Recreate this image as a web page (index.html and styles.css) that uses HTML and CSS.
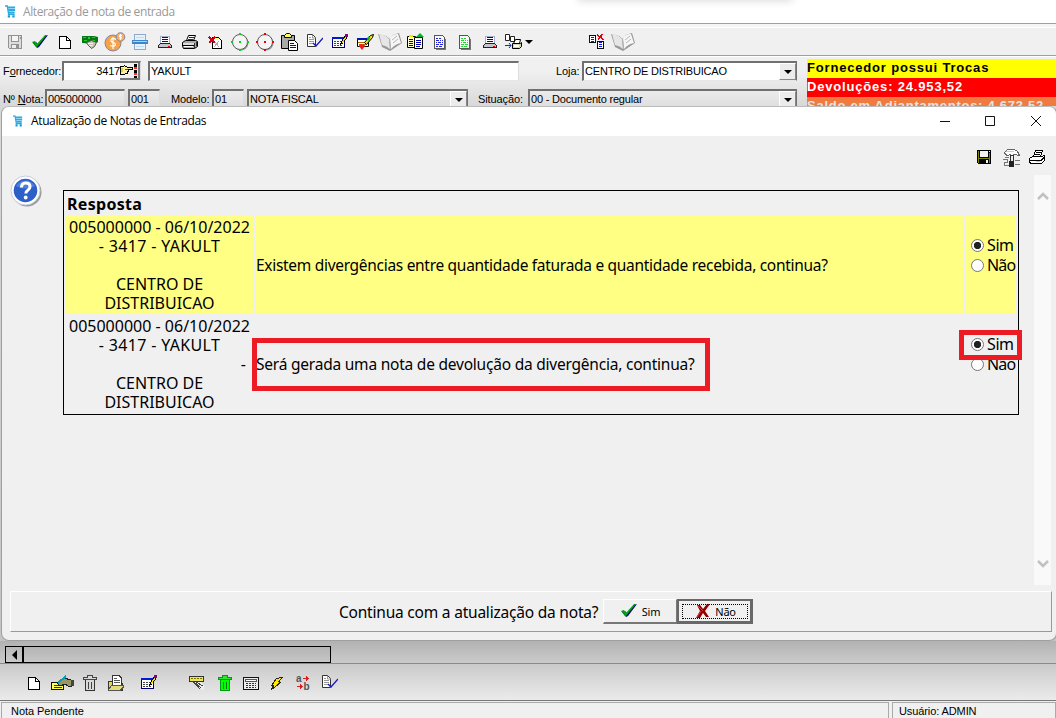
FILE: index.html
```html
<!DOCTYPE html>
<html lang="pt-BR">
<head>
<meta charset="utf-8">
<title>Alteração de nota de entrada</title>
<link rel="stylesheet" href="styles.css">
</head>
<body>
<svg class="defs" aria-hidden="true">
  <symbol id="cart" viewBox="0 0 12 14"><path d="M0 1h2.500l1.500 9h6.500" fill="none" stroke="#29abe2" stroke-width="1.500"/><path d="M3 1.500h8v2.200H3zM3.500 4.300H11v2.200H3.700zM4 7h6.500v2.200H4z" fill="#29abe2"/><path d="M3 11h2.500v2.500H3zM8 11h2.500v2.500H8z" fill="#1597d4"/></symbol>
  <symbol id="floppy-off" viewBox="0 0 16 16"><path d="M1.500 1.500h13v13h-12l-1-1z" fill="#ddd" stroke="#929292"/><path d="M4.500 1.500h7v6h-7z" fill="#f4f4f4" stroke="#929292"/><path d="M4.500 10.500h7v4h-7z" fill="#eee" stroke="#929292"/><path d="M9 11h2v3H9zM13 3h1v2h-1z" fill="#929292"/></symbol>
  <symbol id="check" viewBox="0 0 18 16"><path d="M2 9l3-1 2 2 7-8 3-1-9 12-2 1z" fill="#000080"/><path d="M1 8l3-1 2 3 8-9h2L6 13H5z" fill="#009a10"/><path d="M4 8l2 3 7-8" fill="none" stroke="#12ae1c"/></symbol>
  <symbol id="page" viewBox="0 0 16 16"><path d="M2.500 2.500h7l4 4v8h-11z" fill="#fff" stroke="#000"/><path d="M9.500 2.500v4h4" fill="none" stroke="#000"/></symbol>
  <symbol id="money" viewBox="0 0 18 16"><path d="M1 2h12l4 1v5l-4 2-12-1z" fill="#087515"/><path d="M2 3h3v1H2zM7 3h2v2H7zM11 3h3v1h-3zM3 6h3v1H3zM11 6h3v1h-3z" fill="#16d329"/><path d="M5.500 8.500l5-2 5 2-2 4-3 2-4-4z" fill="#c6c6b8" stroke="#555"/><path d="M7 9.500h5M8 11.500h4" stroke="#eee"/></symbol>
  <symbol id="coin" viewBox="0 0 22 20"><circle cx="9" cy="11" r="8" fill="#f6a347" stroke="#8884a5"/><circle cx="16.500" cy="5" r="4.300" fill="#f7ae62" stroke="#8884a5"/><path d="M12 7.500c-5-3-7 2-3 3s3 5-3 3M9 5v12M18 3.500c-3-1-3 1-1.500 1.500s1 2-1 1M16.500 2v6" fill="none" stroke="#fff" stroke-width="1.200"/></symbol>
  <symbol id="scan" viewBox="0 0 16 16"><path d="M2.500.5h11v6h-11zM2.500 9.500h11v6h-11z" fill="#e4f2ff" stroke="#92a9c8"/><path d="M0 6h16v4H0z" fill="#3b85cf"/><path d="M1 7.500h14" stroke="#a9d6ff"/><path d="M4 3.500h8M4 12.500h8" stroke="#bfdcf5"/></symbol>
  <symbol id="laptop" viewBox="0 0 16 16"><path d="M3.500 2.500h9v7h-9z" fill="#fff" stroke="#aac"/><path d="M5 3.500h6M5 5.500h6M5 7.500h6" stroke="#0000d8"/><path d="M1.500 11.500l2-2h9l2 2v2h-13z" fill="#c5c5d0" stroke="#222"/><path d="M11 12.500h2" stroke="#e00"/></symbol>
  <symbol id="printer" viewBox="0 0 18 16"><path d="M5.500 6.500l2-5h7l-2 5z" fill="#fff" stroke="#000"/><path d="M8 3.500h5M7 5.500h5" stroke="#1919d0"/><path d="M1.500 8.500l3-2h10l2 1v5l-3 2h-11l-1-2z" fill="#aaa" stroke="#000"/><path d="M2 9h11v2H2z" fill="#ddd"/><path d="M2 11.500h11" stroke="#000"/><path d="M3 12h9v1H3z" fill="#fff"/><path d="M13.500 9v5M15.500 8v4" stroke="#333"/></symbol>
  <symbol id="print2" viewBox="0 0 18 16"><path d="M5.500 7.500l2-6h7l-2 6z" fill="#fff" stroke="#000"/><path d="M8 3.500h5M7 5.500h5" stroke="#000"/><path d="M1.500 9.500l3-2h9l3-1v5l-3 3h-11l-1-2z" fill="#fff" stroke="#000"/><path d="M2 11.500h11l3-3" fill="none" stroke="#000"/><path d="M8 12h4v1H8z" fill="#eade00"/></symbol>
  <symbol id="delpage" viewBox="0 0 16 16"><path d="M5.500 3.500h6l3 3v8h-9z" fill="#fff" stroke="#000"/><path d="M8 8l4 5M12 7l-5 6" stroke="#aaa"/><path d="M9 4h3v2H9z" fill="#ff8"/><path d="M2 3l6 6M8 3L2 9" stroke="#d00018" stroke-width="1.500"/></symbol>
  <symbol id="circle" viewBox="0 0 18 18"><circle cx="10" cy="10" r="7.500" fill="#999"/><circle cx="9" cy="9" r="7.500" fill="#f4f4f4" stroke="#5b565b"/><path d="M8 0h2v2H8zM0 8h2v2H0zM8 8h2v2H8zM16 8h2v2h-2zM8 16h2v2H8z" fill="currentColor"/></symbol>
  <symbol id="paste" viewBox="0 0 18 18"><path d="M.5 2.500h13v13H.5z" fill="#aaa" stroke="#000"/><path d="M3.500 2.500l2-2h3l2 2v2h-7z" fill="#ffff58" stroke="#000"/><path d="M7.500 7.500h6l3 3v7h-9z" fill="#fff" stroke="#000"/><path d="M9 10.500h4M9 12.500h6M9 14.500h6" stroke="#00e"/></symbol>
  <symbol id="doccheck" viewBox="0 0 17 16"><path d="M1.500.5h5l3 3v9h-8z" fill="#fff" stroke="#333"/><path d="M3 3.500h2M3 5.500h5M3 7.500h5M3 9.500h4M6.500 1v3h3" stroke="#999" fill="none"/><path d="M7 9l3 3 7-8" fill="none" stroke="#1818bd" stroke-width="1.300"/></symbol>
  <symbol id="note" viewBox="0 0 17 16"><path d="M1.500 3.500h12v10h-12z" fill="#fff" stroke="#000080"/><path d="M1 3h12v2H1z" fill="#001bd0"/><path d="M3 7.500h8M3 9.500h8M3 11.500h8" stroke="#444" stroke-dasharray="2 1"/><path d="M9.500 10.500l1-3 4-6 2 1-4 6z" fill="#f0de00" stroke="#000"/><path d="M14 0h3v3h-3z" fill="#850082"/></symbol>
  <symbol id="broom" viewBox="0 0 18 18"><path d="M1.500 5.500h11v8h-11z" fill="#fff" stroke="#000"/><path d="M1 5h11v2H1z" fill="#0016bb"/><path d="M2 9.500h9M3 11.500h8" stroke="#b56b00"/><path d="M8.500 9.500l6-7 3-1-1 3-6 7z" fill="#ede500" stroke="#000"/><path d="M11 5l2-2 1 3-2 2z" fill="#00b526"/><path d="M4 11l2 1 2-1 1 2-3 4-3-4z" fill="#f01a1a"/></symbol>
  <symbol id="book" viewBox="0 0 24 20"><path d="M0 2l8 2 4 3 3-4 6-2 3 10-9 6-3 2-8-4z" fill="#999"/><path d="M1 2q7 1 10 5l1 10q-3-3-8-4z" fill="#e6e6e6"/><path d="M12 7q2-5 8-5l3 9q-6 1-10 6z" fill="#f6f6f6"/><path d="M11.500 7l1 10M14 8l5-4M15 11l5-4" fill="none" stroke="#b5b5b5"/></symbol>
  <symbol id="clips" viewBox="0 0 18 18"><path d="M1.500 3.500h8v11h-8z" fill="#ffc" stroke="#000"/><path d="M8.500 4.500h8v11h-8z" fill="#ffe" stroke="#000"/><path d="M3 6.500h4M3 8.500h4M3 10.500h4M3 12.500h4M10 7.500h5M10 9.500h5M10 11.500h5M10 13.500h4" stroke="#00a"/><path d="M3 2h4v2H3z" fill="#eee700"/><path d="M10 4l4-4 4 4z" fill="#00b52b"/></symbol>
  <symbol id="doclines" viewBox="0 0 16 16"><path d="M4 3h8l2 3v10H4z" fill="#777"/><path d="M2.500 1.500h8l2 2v11h-10z" fill="#f7f7f7" stroke="#555"/><path d="M4 4.500h2m1 0h2M4 6.500h3m1 0h1m1 0h1M4 8.500h1m1 0h3m1 0h1M4 10.500h3m1 0h3M4 12.500h2m1 0h3" stroke="currentColor"/></symbol>
  <symbol id="copyprint" viewBox="0 0 18 16"><path d="M1.500.5h4v6h-4zM6.500 2.500h4v5h-4z" fill="#fff" stroke="#222"/><path d="M1 11.500h6M5 9l2 2.500-2 2.500" fill="none" stroke="#0030cc"/><path d="M9.500 9.500l2-4h5l-1 4" fill="#fff" stroke="#000"/><path d="M8.500 9.500h8l1-1v4l-2 2h-7z" fill="#d6d6ab" stroke="#000"/><path d="M10 11h5v2h-5z" fill="#fff"/></symbol>
  <symbol id="docsx" viewBox="0 0 16 17"><path d="M.5 1.500h6v8h-6zM8.500 7.500h6v8h-6z" fill="#fff" stroke="#000"/><path d="M2 3.500h3M2 5.500h3M2 7.500h3M10 9.500h3M10 11.500h3M10 13.500h3" stroke="#00e"/><path d="M8 1l7 5M14 0L9 6" stroke="#e00015" stroke-width="1.800"/></symbol>
  <symbol id="trash" viewBox="0 0 14 16"><path d="M2.500 4.500h9v11h-9z" fill="currentColor" stroke="#333"/><path d="M.5 4.500v-2h4v-2h5v2h4v2z" fill="currentColor" stroke="#444"/><path d="M5.500 7v7M8.500 7v7" stroke="#444"/></symbol>
  <symbol id="trash-green" viewBox="0 0 14 16"><path d="M2.500 4.500h9v11h-9z" fill="#0f0" stroke="#009b12"/><path d="M.5 4.500v-2h4v-2h5v2h4v2z" fill="#2fe52f" stroke="#009b12"/><path d="M5.500 7v7M8.500 7v7" stroke="#087a12"/></symbol>
  <symbol id="handnote" viewBox="0 0 23 16"><path d="M.5 7.500h12v7H.5z" fill="#ff5" stroke="#111"/><path d="M3 10.500h8M3 12.500h8" stroke="#02f"/><path d="M6 8l7-5 7 2v6h-3l-3-2-5 2z" fill="#999665" stroke="#222"/><path d="M7 8l8-7" stroke="#00a3be" stroke-width="2"/><path d="M20 5h3v6h-3z" fill="#444"/></symbol>
  <symbol id="folder" viewBox="0 0 18 17"><path d="M1.500 6.500h4l1 2h9v7h-14z" fill="#ded950" stroke="#333"/><path d="M5.500.5h6l3 3v7h-9z" fill="#fff" stroke="#333"/><path d="M7 3.500h3M7 5.500h6M7 7.500h6" stroke="#555"/><path d="M1.500 15.500l3-5h12v2l-3 3z" fill="#e2dc7a" stroke="#555"/></symbol>
  <symbol id="handmoney" viewBox="0 0 18 16"><path d="M1.500 1.500h14v5h-14z" fill="#ebe65a" stroke="#333"/><path d="M3 3.500h11" stroke="#777100" stroke-dasharray="2 1"/><path d="M5 7l5 4 2 3 4 1v-5l-4-3z" fill="#eee"/><path d="M5 7l4 4 3 3M8 7l7 4M6 7l7 6" stroke="#444" fill="none"/></symbol>
  <symbol id="calc" viewBox="0 0 16 16"><path d="M.5 2.500h15v12H.5z" fill="#eee" stroke="#111"/><path d="M2.500 4.500h11v2h-11z" fill="#fff" stroke="#555"/><path d="M3 8.500h10M3 10.500h10M3 12.500h10" stroke="#333" stroke-dasharray="2 1"/></symbol>
  <symbol id="bolt" viewBox="0 0 14 16"><path d="M6.500 3.500l6-1-4 4 2 1-5 4-4 3 2-4h-2z" fill="#ffea00" stroke="#222"/></symbol>
  <symbol id="floppy" viewBox="0 0 14 14"><path d="M0 0h14v14H1l-1-1z" fill="#000"/><path d="M1 1h1v12H1zM12 3h1v10h-1zM2 8h10v1H2z" fill="#808000"/><path d="M3 1h8v6H3zM9 10h2v3H9zM12 1h1v1h-1z" fill="#f0f0f0"/></symbol>
  <symbol id="hammer" viewBox="0 0 18 18"><path d="M2.500 3.500l3-3h7l3 2 2 4-5-1h-1v2h-3v-2l-3 1-2-1z" fill="#fff" stroke="#666"/><path d="M4 2h8v1H4z" fill="#ccc"/><path d="M8.500 6.500h3v10h-3z" fill="#eee" stroke="#333"/><path d="M7 12h5v6H7z" fill="#222"/><path d="M3 8.500h4M1 10.500h4v3H2v3h5M13 11.500h5M13 15.500h5" fill="none" stroke="#777"/></symbol>
  <symbol id="hand" viewBox="0 0 14 11"><path d="M.5 1.500h3l1-1 3 2h5v2h-4v2h-1v2h-2l-1 1h-4z" fill="#f7efa0" stroke="#000"/><path d="M1 3h2v4H1z" fill="#e4cc43"/><path d="M5 4.500h3" stroke="#655900"/></symbol>
  <symbol id="chev" viewBox="0 0 12 8"><path d="M1 7l5-5 5 5" fill="none" stroke="#c1c1c1" stroke-width="2.500"/></symbol>
  <symbol id="cross" viewBox="0 0 14 14"><path d="M1 1h3l3 4 4-5h3L9 7l4 6h-3l-3-4-3 5H0l4-7z" fill="#900000"/><path d="M1 1l6 6M1 13l4-6" fill="none" stroke="#d63b3b"/></symbol>
</svg>

<div class="app">
  <header class="app-title"><svg class="cart"><use href="#cart"/></svg><span class="t-app">Alteração de nota de entrada</span></header>
  <nav class="toolbar">
    <i><svg class="s16"><use href="#floppy-off"/></svg></i>
    <i><svg class="s18"><use href="#check"/></svg></i>
    <i><svg class="s16"><use href="#page"/></svg></i>
    <i><svg class="s18"><use href="#money"/></svg></i>
    <i><svg class="s22"><use href="#coin"/></svg></i>
    <i><svg class="s16"><use href="#scan"/></svg></i>
    <i><svg class="s16"><use href="#laptop"/></svg></i>
    <i><svg class="s18"><use href="#printer"/></svg></i>
    <i><svg class="s16"><use href="#delpage"/></svg></i>
    <i><svg class="s18 green"><use href="#circle"/></svg></i>
    <i><svg class="s18 red"><use href="#circle"/></svg></i>
    <i><svg class="s18"><use href="#paste"/></svg></i>
    <i><svg class="s17 smooth"><use href="#doccheck"/></svg></i>
    <i><svg class="s17"><use href="#note"/></svg></i>
    <i><svg class="s18"><use href="#broom"/></svg></i>
    <i><svg class="s24"><use href="#book"/></svg></i>
    <i><svg class="s18"><use href="#clips"/></svg></i>
    <i><svg class="s16 blue"><use href="#doclines"/></svg></i>
    <i><svg class="s16 lime"><use href="#doclines"/></svg></i>
    <i><svg class="s16"><use href="#laptop"/></svg></i>
    <i class="slot-print"><svg class="s18"><use href="#copyprint"/></svg><b class="tri"></b></i>
    <i class="slot-docs"><svg class="s16"><use href="#docsx"/></svg></i>
    <i class="slot-book"><svg class="s24"><use href="#book"/></svg></i>
  </nav>
  <section class="head">
    <div class="form">
      <div class="row row1">
        <label class="l1">F<u>o</u>rnecedor:</label>
        <div class="field supplier"><span>3417</span><button class="pick"><svg class="hand"><use href="#hand"/></svg><em></em></button></div>
        <div class="field name">YAKULT</div>
        <label class="l2">Loja:</label>
        <div class="field combo"><span>CENTRO DE DISTRIBUICAO</span><button class="drop"><b class="tri"></b></button></div>
      </div>
      <div class="row row2">
        <label class="l3">Nº <u>N</u>ota:</label>
        <div class="field dim">005000000</div>
        <div class="field dim">001</div>
        <label class="l4">Modelo:</label>
        <div class="field dim">01</div>
        <div class="field dim combo"><span>NOTA FISCAL</span><button class="drop"><b class="tri"></b></button></div>
        <label class="l5">Situação:</label>
        <div class="field dim combo"><span>00 - Documento regular</span><button class="drop"><b class="tri"></b></button></div>
      </div>
    </div>
    <aside class="alerts">
      <div class="a1"><span>Fornecedor possui Trocas</span></div>
      <div class="a2"><span>Devoluções: 24.953,52</span></div>
      <div class="a3"><span>Saldo em Adiantamentos: 4.673,52</span></div>
    </aside>
  </section>
  <div class="work"></div>
  <div class="hscroll"><div class="arrow"><b></b></div><div class="thumb"></div></div>
  <nav class="bottombar">
    <svg class="s16"><use href="#page"/></svg>
    <svg class="s23"><use href="#handnote"/></svg>
    <svg class="s14 grey"><use href="#trash"/></svg>
    <svg class="s18"><use href="#folder"/></svg>
    <svg class="s17"><use href="#note"/></svg>
    <svg class="s18"><use href="#handmoney"/></svg>
    <svg class="s14"><use href="#trash-green"/></svg>
    <svg class="s16"><use href="#calc"/></svg>
    <svg class="s14"><use href="#bolt"/></svg>
    <span class="ab"><span>a</span><span>b</span><svg viewBox="0 0 14 16"><path d="M7 3.500h4M1 11.500h4" stroke="#d82020"/><path d="M10 1l3 2.500L10 6zM4 9l3 2.500L4 14z" fill="#d82020"/></svg></span>
    <svg class="s17 smooth"><use href="#doccheck"/></svg>
  </nav>
  <footer class="status"><div>Nota Pendente</div><div>Usuário: ADMIN</div></footer>
</div>
<div class="pill"></div>

<section class="dialog">
  <header class="dlg-title">
    <svg class="cart"><use href="#cart"/></svg><span class="t-dlg">Atualização de Notas de Entradas</span>
    <svg class="winbtns" viewBox="0 0 104 12"><path d="M0 6.500h10M45.500 1.500h9v9h-9zM91 1l10 10M101 1L91 11" fill="none" stroke="#111"/></svg>
  </header>
  <div class="dlg-tools">
    <svg class="s14"><use href="#floppy"/></svg><svg class="s18"><use href="#hammer"/></svg><svg class="prn"><use href="#print2"/></svg>
  </div>
  <div class="dlg-main">
    <svg class="help" viewBox="0 0 32 32"><circle cx="17" cy="17" r="14.500" fill="#999"/><circle cx="15.500" cy="15.500" r="14.500" fill="#fff" stroke="#c5cce0"/><circle cx="15.500" cy="15.500" r="11.800" fill="#2d5fc9"/><path d="M6 11a11 11 0 0 1 19 0q-9 5-19 0" fill="#4f7fdb"/><path d="M11.500 12.500q0-4.500 4.200-4.500 4.300 0 4.300 3.700 0 2-2.200 3.500-2 1.200-2 3.300" fill="none" stroke="#fff" stroke-width="3"/><circle cx="15.700" cy="22.500" r="1.900" fill="#fff"/></svg>
    <div class="answers">
      <h1>Resposta</h1>
      <div class="ans hot">
        <div class="id"><p>005000000 - 06/10/2022</p><p class="wide">- 3417 - YAKULT</p><p class="gap">CENTRO DE</p><p>DISTRIBUICAO</p></div>
        <div class="q"><span class="q1">Existem divergências entre quantidade faturada e quantidade recebida, continua?</span></div>
        <div class="opts"><label><b class="radio on"></b>Sim</label><label><b class="radio"></b><span class="nao">Não</span></label></div>
      </div>
      <div class="ans">
        <div class="id"><p>005000000 - 06/10/2022</p><p class="wide">- 3417 - YAKULT</p><p class="gap">CENTRO DE</p><p>DISTRIBUICAO</p><span class="dash">-</span></div>
        <div class="q"><span class="q2">Será gerada uma nota de devolução da divergência, continua?</span><div class="mark mark-q"></div></div>
        <div class="opts"><label><b class="radio on"></b>Sim</label><label><b class="radio"></b><span class="nao">Não</span></label><div class="mark mark-o"></div></div>
      </div>
    </div>
    <div class="vscroll"><svg><use href="#chev"/></svg><svg class="flip"><use href="#chev"/></svg></div>
  </div>
  <footer class="confirm">
    <span class="ask">Continua com a atualização da nota?</span>
    <button class="btn"><svg class="s18"><use href="#check"/></svg><span>Sim</span></button>
    <button class="btn focus"><svg class="s14"><use href="#cross"/></svg><span>Não</span></button>
  </footer>
</section>
</body>
</html>
```
FILE: styles.css
```css
*{box-sizing:border-box}
body{margin:0;width:1056px;height:718px;overflow:hidden;position:relative;background:#f0f0f0;font:11px "Liberation Sans",sans-serif;color:#000}
button{padding:0;border:0;font:inherit;background:#f0f0f0}
svg{display:block;flex:none}
.defs{position:absolute;width:0;height:0}
.s14{width:14px;height:16px}.s16{width:16px;height:16px}.s17{width:17px;height:16px}.s18{width:18px;height:18px}.s22{width:22px;height:20px}.s23{width:23px;height:16px}.s24{width:24px;height:20px}
.s16,.s17,.s23,.bottombar svg,.dlg-tools svg,.hand{shape-rendering:crispEdges}
svg.smooth.smooth{shape-rendering:auto}
.green{color:#00d51c}.red{color:#e00}.blue{color:#22d}.lime{color:#1fd62f}.grey{color:#d8d8d8}
.app{height:718px;display:flex;flex-direction:column}
.app-title{height:23px;background:#fff;display:flex;align-items:center;padding:0 0 1px 5px;color:#999}
.app-title .cart{width:11px;height:13px;margin-right:7px}
.t-app,.t-dlg{font:12px "Open Sans",sans-serif;white-space:nowrap}
.app .t-app{letter-spacing:-.4px}
.toolbar{height:33px;border-top:1px solid #a0a0a0;border-bottom:1px solid #a0a0a0;box-shadow:inset 0 3px #f5f5f5,inset 0 4px #fff;display:flex;align-items:center;padding:4px 0 0 2px}
.toolbar i{width:25px;display:flex;justify-content:center;align-items:center;flex:none}
.toolbar .slot-print{width:36px;justify-content:flex-start;padding-left:2px;gap:3px}
.toolbar .slot-docs{margin-left:46px}
.toolbar .slot-book{margin-left:1px}
.tri{width:0;height:0;border:4px solid transparent;border-top-color:#000;border-bottom:0}
.head{height:50px;display:flex;background:linear-gradient(#f0f0f0 30%,#d8d8d8);border-top:1px solid #fff}
.form{width:807px;padding-top:4px;white-space:nowrap}
.row{display:grid;align-items:start;height:20px;padding-left:3px}
.row1{grid-template-columns:59px 79px 7px 371px 37px 26px 215px}
.row1 .supplier{grid-column:2}.row1 .name{grid-column:4}.row1 .l2{grid-column:6}
.row2{margin-top:8px;grid-template-columns:42px 80px 3px 32px 11px 41px 32px 3px 221px 10px 50px 269px}
.row2>:nth-child(3){grid-column:4}.row2 .l4{grid-column:6}.row2>:nth-child(5){grid-column:7}.row2>:nth-child(6){grid-column:9}.row2 .l5{grid-column:11}
.row label{padding-top:4px;letter-spacing:-.1px}
.field{height:20px;background:#fff;border:1px solid #a0a0a0;border-top:2px solid #707070;border-left:2px solid #707070;border-right-color:#ddd;border-bottom-color:#e7e7e7;line-height:16px;padding-left:1px;display:flex;overflow:hidden;letter-spacing:-.19px}
.combo{border-right:1px solid #707070}
.dim{background:linear-gradient(#ececec,#ddd)}
.field>span{flex:1}
.supplier span{text-align:right}
.pick{width:20px;display:flex;align-items:center;border-right:2px solid #777;border-bottom:2px solid #777}
.hand{width:14px;height:11px}.pick em{width:3px;height:14px;background:repeating-linear-gradient(#000 0 3px,#e33 3px 5px,#eee 5px 6px)}
.drop{width:17px;display:flex;align-items:center;justify-content:center;border:1px solid #fff;border-right-color:#888;border-bottom-color:#888;background:#ececec}
.alerts{flex:1;padding-top:2px;font-weight:bold;font-size:13px;white-space:nowrap;overflow:hidden}
.alerts div{height:19px;line-height:17px}
.a1{background:#ff0}.a2{background:red;color:#fff}.a3{background:#f07b40;color:#e4e4e4}
.alerts span{letter-spacing:.82px}
.a3 span{letter-spacing:.74px}
.work{flex:1;background:linear-gradient(#d8d8d8,#c4c4c4)}
.hscroll{height:23px;padding:5px 0 0 5px;background:linear-gradient(#b2b2b2,#cbcbcb);border-bottom:1px solid #8a8a8a;display:flex}
.arrow{width:18px;height:17px;border:1px solid #000;display:flex;align-items:center;justify-content:center}
.arrow b{border:5px solid transparent;border-right-color:#000;border-left:0}
.thumb{width:308px;height:17px;border:1px solid #000;background:linear-gradient(#b4b4b4,#c6c6c6)}
.bottombar{height:36px;background:linear-gradient(#cacaca,#ebebeb);display:grid;grid-template-columns:25px 32px 24px 33px 48px 30px 25px 27px 26px 25px 17px;align-items:center;padding:1px 0 0 26px}
.ab{width:14px;height:16px;position:relative;font:bold 10px/8px "Liberation Sans",sans-serif;color:#555;display:flex;gap:2px}
.ab span+span{align-self:flex-end}
.ab svg{position:absolute;inset:0;width:14px;height:16px}
.status{height:18px;border-top:1px solid #777;display:grid;grid-template-columns:888px 164px;column-gap:3px;padding:1px 0 0 1px;background:#f0f0f0}
.status div{border:1px solid #aaa;border-bottom:0;padding:2px 0 0 9px;letter-spacing:-.05px}
.status div+div{padding-left:6px;letter-spacing:-.1px}
.pill{position:absolute;left:578px;top:-8px;width:214px;height:6px;box-shadow:0 2px 9px #ccc}
.dialog{position:absolute;left:1px;top:106px;width:1056px;height:535px;background:#f0f0f0;border:1px solid #a0a0a0;border-top-color:#bbb;border-radius:8px;display:flex;flex-direction:column;overflow:hidden}
.dlg-title{height:29px;background:#fff;display:flex;align-items:center;padding:0 0 2px 11px;flex:none}
.dlg-title .cart{width:10px;height:12px;margin-right:8px}
.dialog .t-dlg{letter-spacing:-.37px}
.winbtns{width:104px;height:12px;margin-left:auto;margin-right:12px}
.dlg-tools{height:39px;padding:13px 10px 0 0;display:flex;justify-content:flex-end;gap:11px;align-items:flex-start;flex:none}
.dlg-tools .prn{width:18px;height:16px;margin-left:-3px}
.dlg-main{height:410px;display:grid;grid-template-columns:61px 956px 15px 17px;flex:none}
.help{width:32px;height:32px;margin-left:8px}
.answers{margin-top:15px;height:225px;border:1px solid #000;padding:1px 2px;font:16px/19px "Noto Sans",sans-serif}
.answers h1{margin:0 0 2px;height:22px;padding:2px 0 0 1px;font:bold 16px/21px "Noto Sans",sans-serif;letter-spacing:.3px}
.ans{height:97px;margin-bottom:2px;display:grid;grid-template-columns:187px 709px 50px;column-gap:2px}
.hot>div{background:#ffff84}
.id{text-align:center;padding-top:2px;position:relative;white-space:nowrap}
.id p{margin:0;height:19px}
.id .wide{letter-spacing:.35px}
.id .gap{margin-top:19px}
.id .dash{position:absolute;right:7px;top:40px}
.q{display:flex;align-items:center;position:relative;white-space:nowrap;padding:1px 0 0 1px;font-size:15.5px}
.q1{letter-spacing:-.3px}
.q2{letter-spacing:-.22px}
.opts{display:flex;flex-direction:column;justify-content:center;position:relative;padding:0 0 18px 5px;letter-spacing:-.4px}
.opts label{display:flex;align-items:center;gap:3px;height:20px;white-space:nowrap}
.nao{letter-spacing:-.8px}
.radio{width:13px;height:13px;border:1px solid #767676;border-radius:50%;background:#fff;flex:none}
.on{background:radial-gradient(circle,#222 0 3.300px,#fff 4px)}
.mark{position:absolute;border:5px solid #ed1c24}
.mark-q{left:-3px;top:23px;width:458px;height:53px}
.mark-o{left:-7px;top:15px;width:63px;height:30px}
.vscroll{grid-column:4;background:#f9f9f9;display:flex;flex-direction:column;justify-content:space-between;align-items:center;padding:17px 0}
.vscroll svg{width:12px;height:8px}.flip{transform:rotate(180deg)}
.confirm{margin:6px 4px 0 8px;height:41px;border:1px solid #fff;border-right-color:#999;border-bottom-color:#999;display:flex;align-items:center;padding-left:328px;flex:none}
.ask{font:15.5px "Noto Sans",sans-serif;letter-spacing:-.21px;width:264px;white-space:nowrap}
.btn{width:74px;height:25px;display:flex;align-items:center;justify-content:center;gap:4px;font:11px "Noto Sans",sans-serif;letter-spacing:-.3px;border:1px solid #fff;border-right:1px solid #777;border-bottom:2px solid #777}
.focus{width:76px;border:2px solid #686868;border-right-width:3px;border-bottom-width:3px;outline:1px dotted #000;outline-offset:-6px;gap:5px}
.focus .s14{margin-left:3px}
```
